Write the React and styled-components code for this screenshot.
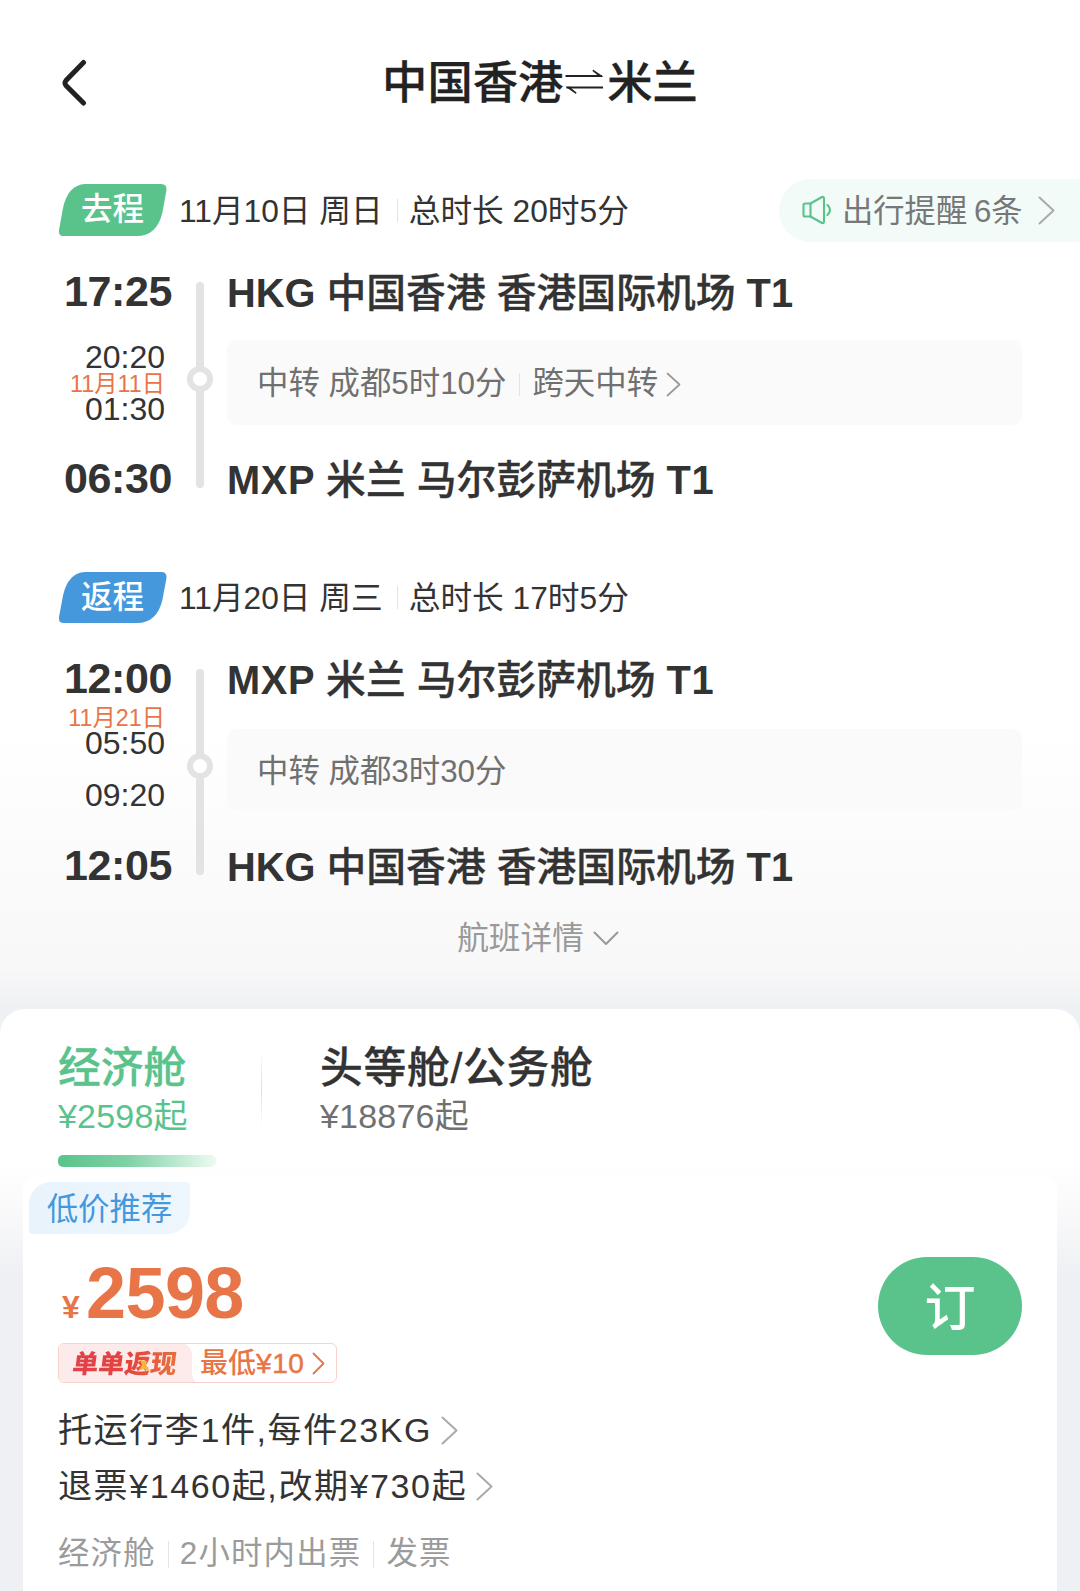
import React from "react";
import styled, { createGlobalStyle } from "styled-components";

const GREEN = "#5ac38b";
const BLUE = "#4598dc";
const ORANGE = "#e87547";
const INK = "#333";

const GlobalStyle = createGlobalStyle`
  *, *::before, *::after { box-sizing: border-box; }
  html, body { margin: 0; padding: 0; }
  body {
    font-family: "Liberation Sans", "Noto Sans CJK SC", sans-serif;
    color: ${INK};
    background: #eff0f4;
  }
`;

const Page = styled.main`
  display: flex;
  flex-direction: column;
  width: 1080px;
  height: 1591px;
  overflow: hidden;
  background: linear-gradient(#fff 730px, #fafafa 890px, #f8f8f9 968px, #eff0f3 1012px, #eff0f4);
`;

const Header = styled.header`
  display: grid;
  grid-template-columns: 120px 1fr 120px;
  align-items: center;
  flex: none;
  height: 166px;
`;

const BackButton = styled.button`
  display: flex;
  justify-content: flex-end;
  width: 87px;
  padding: 0;
  border: 0;
  background: none;
`;

const Title = styled.h1`
  display: flex;
  justify-content: center;
  align-items: center;
  margin: 0;
  padding-top: 2px;
  color: #222;
  font-size: 45.3px;
  font-weight: 500;
  line-height: 60px;
  -webkit-text-stroke: 0.3px currentColor;

  svg { margin: 0 3px 6px 2px; }
`;

const Leg = styled.section`
  flex: none;
  height: ${(p) => p.$height}px;
`;

const LegHead = styled.div`
  display: flex;
  align-items: center;
  height: 64px;
  margin-top: ${(p) => p.$top}px;
  padding-left: 58px;
`;

const Badge = styled.span`
  position: relative;
  display: flex;
  justify-content: center;
  width: 109px;
  height: ${(p) => p.$height}px;
  margin-right: 12px;
  color: #fff;
  font-size: 31.5px;
  font-weight: 500;
  line-height: 50px;

  svg { position: absolute; inset: 0; }
  span { position: relative; }
`;

const Meta = styled.span`
  padding-top: 2px;
  color: ${INK};
  font-size: 31.7px;
  line-height: 60px;
  white-space: pre;
`;

const Divider = styled.i`
  flex: none;
  width: 1px;
  height: ${(p) => p.$height}px;
  margin: 0 ${(p) => p.$right}px 0 ${(p) => p.$left}px;
  background: #e3e3e3;
`;

const Reminder = styled.a`
  display: flex;
  align-items: center;
  width: 301px;
  height: 63px;
  margin-left: auto;
  padding-left: 23px;
  border-radius: 32px 0 0 32px;
  background: #f2fbf8;
  color: #777;
  font-size: 31.3px;
  line-height: 60px;
  white-space: pre;

  span { padding-top: 3px; margin: 0 15px 0 10px; word-spacing: -2px; }
`;

const Route = styled.div`
  display: grid;
  grid-template-columns: 172px 55px 795px;
  grid-template-rows: 50px ${(p) => p.$middle}px 50px;
  margin-top: ${(p) => p.$top}px;
`;

const Time = styled.time`
  grid-column: 1;
  grid-row: ${(p) => p.$row};
  text-align: right;
  font-size: 43px;
  font-weight: 700;
  line-height: 49px;
  letter-spacing: -0.4px;
`;

const Stops = styled.div`
  display: flex;
  flex-direction: column;
  grid-column: 1;
  grid-row: 2;
  padding: ${(p) => p.$top}px 7px 0 0;
  text-align: right;
`;

const StopTime = styled.time`
  height: 26px;
  margin-top: ${(p) => p.$gap || 0}px;
  font-size: 32px;
  line-height: 25px;
`;

const StopDate = styled.span`
  height: 26px;
  color: ${ORANGE};
  font-size: 23.3px;
  line-height: 27px;
`;

const Rail = styled.div`
  display: flex;
  justify-content: center;
  grid-column: 2;
  grid-row: 1 / 4;
  padding: 15px 0 16px 0;
`;

const RailLine = styled.div`
  position: relative;
  width: 8px;
  border-radius: 4px;
  background: #e3e3e3;
`;

const RailStop = styled.i`
  position: absolute;
  top: 83.5px;
  left: -9px;
  width: 26px;
  height: 26px;
  border: 6px solid #e3e3e3;
  border-radius: 50%;
  background: #fff;
`;

const Airport = styled.div`
  grid-column: 3;
  grid-row: ${(p) => p.$row};
  padding-top: 1px;
  font-size: 39.8px;
  font-weight: 500;
  line-height: 50px;
  white-space: pre;
  -webkit-text-stroke: 0.3px currentColor;

  b {
    font-weight: 700;
    letter-spacing: ${(p) => p.$latinSpacing || 0}px;
    -webkit-text-stroke: 0;
  }
`;

const Transfer = styled.div`
  display: flex;
  align-items: center;
  grid-column: 3;
  grid-row: 2;
  height: ${(p) => p.$height}px;
  margin-top: ${(p) => p.$top}px;
  padding: 3px 0 0 30px;
  border-radius: 10px;
  background: #fafafa;
  color: #707070;
  font-size: 31.4px;
  line-height: 50px;
  white-space: pre;

  svg { margin-left: 8px; }
`;

const Details = styled.button`
  display: flex;
  align-items: center;
  align-self: center;
  gap: 9px;
  flex: none;
  height: 60px;
  margin: 19px 4px 41px 0;
  padding: 0;
  border: 0;
  background: none;
  color: #999;
  font: inherit;
  font-size: 31.7px;
  line-height: 60px;
`;

const Sheet = styled.section`
  display: flex;
  flex-direction: column;
  flex: 1;
  border-radius: 25px 25px 0 0;
  background: linear-gradient(#fff 150px, #fcfcfc 180px, #eff0f4 270px);
`;

const Tabs = styled.nav`
  display: flex;
  flex: none;
  height: 166px;
  padding: 29px 0 0 58px;
`;

const Tab = styled.div`
  display: flex;
  flex-direction: column;
  width: ${(p) => p.$width}px;
  color: ${(p) => (p.$active ? GREEN : INK)};
`;

const TabName = styled.strong`
  height: 58px;
  font-size: 42.8px;
  font-weight: 500;
  line-height: 60px;
  letter-spacing: ${(p) => p.$spacing || 0}px;
  -webkit-text-stroke: 0.3px currentColor;
`;

const TabPrice = styled.span`
  height: 40px;
  color: ${(p) => (p.$active ? GREEN : "#707070")};
  font-size: 34px;
  line-height: 40px;
  letter-spacing: 0.2px;
`;

const TabBar = styled.i`
  width: 158px;
  height: 12px;
  margin-top: 19px;
  border-radius: 5px;
  background: linear-gradient(90deg, ${GREEN}, #80d2a6 45%, #eefaf3);
`;

const TabDivider = styled.i`
  width: 1px;
  height: 78px;
  margin: 12px 58px 0 0;
  background: linear-gradient(#fff, #ddd 50%, #fff);
`;

const Fare = styled.article`
  display: flex;
  justify-content: space-between;
  flex: 1;
  margin: 0 23px;
  border-radius: 14px 14px 0 0;
  background: #fff;
`;

const FareInfo = styled.div`
  display: flex;
  flex-direction: column;
  align-items: flex-start;
  padding-top: 7px;
`;

const Tag = styled.span`
  width: 161px;
  height: 52px;
  margin-left: 6px;
  padding-top: 3px;
  border-radius: 22px 4px 22px 4px;
  background: linear-gradient(90deg, #e8f3fc, #eff7fd);
  color: ${BLUE};
  font-size: 31.4px;
  line-height: 50px;
  text-align: center;
`;

const Price = styled.div`
  display: flex;
  align-items: baseline;
  height: 80px;
  margin: 19px 0 0 39px;
  color: ${ORANGE};
  font-weight: 700;
  line-height: 80px;
`;

const Currency = styled.span`
  width: 24px;
  font-size: 32px;
`;

const Amount = styled.span`
  font-size: 72px;
  letter-spacing: -0.6px;
`;

const Cashback = styled.a`
  display: flex;
  align-items: center;
  width: 279px;
  height: 40px;
  margin: 10px 0 0 35px;
  border: 1.5px solid #f7d3cb;
  border-radius: 6px;
  overflow: hidden;
  background: #fff;
  color: ${ORANGE};
  font-size: 28px;
  font-weight: 500;
  line-height: 41px;

  svg { margin-left: 7px; }
  b { font-weight: 500; letter-spacing: 0.6px; -webkit-text-stroke: 0.5px currentColor; }
`;

const CashbackLabel = styled.span`
  position: relative;
  width: 133px;
  height: 40px;
  margin-right: 8px;
  padding-left: 14px;
  border-radius: 0 12px 0 0;
  background: #fdeaea;
  line-height: 37px;

  &::after {
    content: "";
    position: absolute;
    right: -7px;
    bottom: 0;
    width: 7px;
    height: 10px;
    background: radial-gradient(ellipse 7px 10px at 100% 0, transparent 97%, #fdeaea);
  }
`;

const CashbackWord = styled.em`
  display: inline-block;
  font-family: "Noto Sans CJK SC", sans-serif;
  font-size: 26px;
  font-style: normal;
  font-weight: 900;
  transform: skewX(-7deg);
  background: linear-gradient(100deg, #e0404e, #e5443c 55%, #e8743f);
  background-clip: text;
  -webkit-background-clip: text;
  color: transparent;
`;

const Spark = styled.svg`
  position: absolute;
  left: 72px;
  top: 16px;
`;

const Rule = styled.a`
  display: flex;
  align-items: center;
  gap: 9px;
  height: 56px;
  margin-top: ${(p) => p.$top || 0}px;
  padding-left: 35px;
  color: ${INK};
  font-size: 34px;
  line-height: 56px;
  letter-spacing: 1.6px;
`;

const Notes = styled.div`
  display: flex;
  align-items: center;
  height: 40px;
  margin: 20px 0 0 35px;
  color: #9b9b9b;
  font-size: 31.4px;
  line-height: 40px;
  letter-spacing: 1.2px;
`;

const BookButton = styled.button`
  width: 144px;
  height: 98px;
  margin: 82px 35px 0 0;
  padding: 0 0 4px;
  border: 0;
  border-radius: 49px;
  background: ${GREEN};
  color: #fff;
  font-family: "Noto Sans CJK SC", sans-serif;
  font-size: 51px;
  font-weight: 500;
  line-height: 90px;
`;

function Chevron({ width, height, color = "#aaa", weight = 2 }) {
  return (
    <svg width={width} height={height} fill="none" stroke={color} strokeWidth={weight} strokeLinecap="round" strokeLinejoin="round">
      <path d={`M1.5 1.5 L${width - 1.5} ${height / 2} L1.5 ${height - 1.5}`} />
    </svg>
  );
}

function BackIcon() {
  return (
    <svg width="26" height="48" viewBox="0 0 26 48" fill="none" stroke="#222" strokeWidth="5" strokeLinecap="round">
      <path d="M22.5 3.5 L5 21.5 Q3 24 5 26.500 L22.500 44" />
    </svg>
  );
}

function RoundTripIcon() {
  return (
    <svg width="39" height="30" viewBox="0 0 39 30" fill="none" stroke="#222" strokeWidth="2">
      <path d="M0.500 10 H37 M1.500 21.500 H38" />
      <path d="M28 3.500 L38.500 10.800 H34.500 L27.500 5 Z M11 28 L0.500 20.700 H4.500 L11.500 26.500 Z" fill="#222" stroke="none" />
    </svg>
  );
}

function SpeakerIcon() {
  return (
    <svg width="30" height="30" viewBox="0 0 30 30" fill="none" stroke={GREEN} strokeWidth="2.1" strokeLinejoin="round" strokeLinecap="round">
      <path d="M8.500 8.500 H3 Q1.500 8.500 1.500 10 V20 Q1.500 21.500 3 21.500 H8.500 Z" />
      <path d="M8.500 8.500 L20 2 Q22 1.500 22 3.500 V26.500 Q22 28.500 20 28 L8.500 21.500" />
      <path d="M25.500 10 Q30.500 15 25.500 20" />
    </svg>
  );
}

function DirectionBadge({ color, height, children }) {
  return (
    <Badge $height={height}>
      <svg width="109" height={height} viewBox="0 0 109 52" preserveAspectRatio="none" fill={color}>
        <path d="M27 0 H103 Q109 0 108.500 6 L104.500 28 Q99 52 79 52 H5 Q0.500 52 1 46 L5 24 Q10 1 27 0 Z" />
      </svg>
      <span>{children}</span>
    </Badge>
  );
}

export default function App() {
  return (
    <>
      <GlobalStyle />
      <Page>
        <Header>
          <BackButton aria-label="返回"><BackIcon /></BackButton>
          <Title>中国香港<RoundTripIcon />米兰</Title>
        </Header>

        <Leg $height={388}>
          <LegHead $top={12}>
            <DirectionBadge color={GREEN} height={52}>去程</DirectionBadge>
            <Meta>11月10日 周日</Meta>
            <Divider $height={23} $left={14} $right={11} />
            <Meta>总时长 20时5分</Meta>
            <Reminder>
              <SpeakerIcon />
              <span>出行提醒 6条</span>
              <Chevron width={17} height={29} />
            </Reminder>
          </LegHead>
          <Route $top={25} $middle={137}>
            <Time $row={1}>17:25</Time>
            <Airport $row={1}><b>HKG</b> 中国香港 香港国际机场 <b>T1</b></Airport>
            <Stops $top={27.5}>
              <StopTime>20:20</StopTime>
              <StopDate>11月11日</StopDate>
              <StopTime>01:30</StopTime>
            </Stops>
            <Rail><RailLine><RailStop /></RailLine></Rail>
            <Transfer $top={23} $height={85}>
              中转 成都5时10分
              <Divider $height={23} $left={13} $right={12} />
              跨天中转
              <Chevron width={15} height={25} color="#999" weight={1.7} />
            </Transfer>
            <Time $row={3}>06:30</Time>
            <Airport $row={3} $latinSpacing={0.6}><b>MXP</b> 米兰 马尔彭萨机场 <b>T1</b></Airport>
          </Route>
        </Leg>

        <Leg $height={335}>
          <LegHead $top={11}>
            <DirectionBadge color={BLUE} height={51}>返程</DirectionBadge>
            <Meta>11月20日 周三</Meta>
            <Divider $height={23} $left={14} $right={11} />
            <Meta>总时长 17时5分</Meta>
          </LegHead>
          <Route $top={25} $middle={137}>
            <Time $row={1}>12:00</Time>
            <Airport $row={1} $latinSpacing={0.6}><b>MXP</b> 米兰 马尔彭萨机场 <b>T1</b></Airport>
            <Stops $top={1}>
              <StopDate>11月21日</StopDate>
              <StopTime>05:50</StopTime>
              <StopTime $gap={26}>09:20</StopTime>
            </Stops>
            <Rail><RailLine><RailStop /></RailLine></Rail>
            <Transfer $top={25} $height={82}>中转 成都3时30分</Transfer>
            <Time $row={3}>12:05</Time>
            <Airport $row={3}><b>HKG</b> 中国香港 香港国际机场 <b>T1</b></Airport>
          </Route>
        </Leg>

        <Details>
          航班详情
          <svg width="26" height="15" fill="none" stroke="#999" strokeWidth="2" strokeLinecap="round" strokeLinejoin="round">
            <path d="M1.500 1.500 L13 13 L24.500 1.500" />
          </svg>
        </Details>

        <Sheet>
          <Tabs>
            <Tab $active $width={203}>
              <TabName>经济舱</TabName>
              <TabPrice $active>¥2598起</TabPrice>
              <TabBar />
            </Tab>
            <TabDivider />
            <Tab $width={300}>
              <TabName $spacing={0.7}>头等舱/公务舱</TabName>
              <TabPrice>¥18876起</TabPrice>
            </Tab>
          </Tabs>
          <Fare>
            <FareInfo>
              <Tag>低价推荐</Tag>
              <Price><Currency>¥</Currency><Amount>2598</Amount></Price>
              <Cashback>
                <CashbackLabel>
                  <CashbackWord>单单返现</CashbackWord>
                  <Spark width="12" height="14" viewBox="0 0 12 14" fill="#fbb437">
                    <path d="M2 1 L9 2 L8 6 L12 13 L6 10 L1 11 L4 6 Z" />
                  </Spark>
                </CashbackLabel>
                最低<b>¥10</b>
                <Chevron width={13} height={23} color={ORANGE} weight={1.8} />
              </Cashback>
              <Rule $top={19}>托运行李1件,每件23KG<Chevron width={17} height={29} /></Rule>
              <Rule>退票¥1460起,改期¥730起<Chevron width={17} height={29} /></Rule>
              <Notes>
                经济舱
                <Divider $height={27} $left={12} $right={11} />
                2小时内出票
                <Divider $height={27} $left={12} $right={12} />
                发票
              </Notes>
            </FareInfo>
            <BookButton>订</BookButton>
          </Fare>
        </Sheet>
      </Page>
    </>
  );
}
